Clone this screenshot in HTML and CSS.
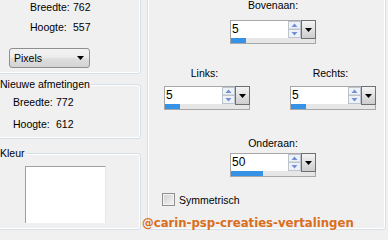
FILE: index.html
```html
<!DOCTYPE html>
<html>
<head>
<meta charset="utf-8">
<link rel="stylesheet" href="styles.css">
</head>
<body>
<div class="dialog">
  <div class="left">
    <div class="group g1">
      <div class="kv">
        <span>Breedte:</span><span>762</span>
        <span>Hoogte:</span><span>557</span>
      </div>
      <div class="select">
        <span>Pixels</span>
        <svg class="tri" width="7" height="4" viewBox="0 0 7 4"><path d="M0 0H7L3.5 4Z"/></svg>
      </div>
    </div>
    <fieldset class="group g2">
      <legend>Nieuwe afmetingen</legend>
      <div class="kv kv2">
        <span>Breedte:</span><span>772</span>
        <span>Hoogte:</span><span>612</span>
      </div>
    </fieldset>
    <fieldset class="group g3">
      <legend>Kleur</legend>
      <div class="swatch"></div>
    </fieldset>
  </div>

  <div class="group place">
    <div class="pos pos-top">
      <div class="lbl">Bovenaan:</div>
      <div class="spin">
        <div class="spin-row">
          <div class="spin-val">5</div>
          <svg class="spin-arrows" width="13" height="17" viewBox="0 0 13 17"><rect x="0.5" y="0.5" width="12" height="7.5" fill="#eef1f5" stroke="#bcc4cd"/><rect x="0.5" y="8.5" width="12" height="8" fill="#eef1f5" stroke="#bcc4cd"/><path d="M6.5 2.5L9.5 6H3.5Z" fill="#6e90d8"/><path d="M6.5 14.5L9.5 11H3.5Z" fill="#6e90d8"/></svg>
          <div class="spin-drop"><svg class="tri" width="7" height="4" viewBox="0 0 7 4"><path d="M0 0H7L3.5 4Z"/></svg></div>
        </div>
        <div class="spin-track"><div class="spin-fill" style="width:15px"></div></div>
      </div>
    </div>

    <div class="pair">
      <div class="pos">
        <div class="lbl">Links:</div>
        <div class="spin">
          <div class="spin-row">
            <div class="spin-val">5</div>
            <svg class="spin-arrows" width="13" height="17" viewBox="0 0 13 17"><rect x="0.5" y="0.5" width="12" height="7.5" fill="#eef1f5" stroke="#bcc4cd"/><rect x="0.5" y="8.5" width="12" height="8" fill="#eef1f5" stroke="#bcc4cd"/><path d="M6.5 2.5L9.5 6H3.5Z" fill="#6e90d8"/><path d="M6.5 14.5L9.5 11H3.5Z" fill="#6e90d8"/></svg>
            <div class="spin-drop"><svg class="tri" width="7" height="4" viewBox="0 0 7 4"><path d="M0 0H7L3.5 4Z"/></svg></div>
          </div>
          <div class="spin-track"><div class="spin-fill" style="width:15px"></div></div>
        </div>
      </div>
      <div class="pos">
        <div class="lbl">Rechts:</div>
        <div class="spin">
          <div class="spin-row">
            <div class="spin-val">5</div>
            <svg class="spin-arrows" width="13" height="17" viewBox="0 0 13 17"><rect x="0.5" y="0.5" width="12" height="7.5" fill="#eef1f5" stroke="#bcc4cd"/><rect x="0.5" y="8.5" width="12" height="8" fill="#eef1f5" stroke="#bcc4cd"/><path d="M6.5 2.5L9.5 6H3.5Z" fill="#6e90d8"/><path d="M6.5 14.5L9.5 11H3.5Z" fill="#6e90d8"/></svg>
            <div class="spin-drop"><svg class="tri" width="7" height="4" viewBox="0 0 7 4"><path d="M0 0H7L3.5 4Z"/></svg></div>
          </div>
          <div class="spin-track"><div class="spin-fill" style="width:15px"></div></div>
        </div>
      </div>
    </div>

    <div class="pos pos-bottom">
      <div class="lbl">Onderaan:</div>
      <div class="spin">
        <div class="spin-row">
          <div class="spin-val">50</div>
          <svg class="spin-arrows" width="13" height="17" viewBox="0 0 13 17"><rect x="0.5" y="0.5" width="12" height="7.5" fill="#eef1f5" stroke="#bcc4cd"/><rect x="0.5" y="8.5" width="12" height="8" fill="#eef1f5" stroke="#bcc4cd"/><path d="M6.5 2.5L9.5 6H3.5Z" fill="#6e90d8"/><path d="M6.5 14.5L9.5 11H3.5Z" fill="#6e90d8"/></svg>
          <div class="spin-drop"><svg class="tri" width="7" height="4" viewBox="0 0 7 4"><path d="M0 0H7L3.5 4Z"/></svg></div>
        </div>
        <div class="spin-track"><div class="spin-fill" style="width:32px"></div></div>
      </div>
    </div>

    <div class="check"><span class="box"></span><span>Symmetrisch</span></div>
  </div>
</div>
<div class="mark">@carin-psp-creaties-vertalingen</div>
</body>
</html>
```

FILE: styles.css
```css
html, body {
  margin: 0;
  padding: 0;
}
body {
  width: 388px;
  height: 240px;
  overflow: hidden;
  position: relative;
  background: #f0f0f0;
  color: #000;
  font-family: "Liberation Sans", Arial, sans-serif;
  font-size: 10.5px;
  line-height: 12px;
}
.dialog {
  display: flex;
  align-items: stretch;
  margin: -14px 0 0 -10px;
  height: 244px;
}
.left {
  display: flex;
  flex-direction: column;
  width: 151px;
  flex: none;
}
.group {
  border: 1px solid #d5dfe5;
  border-radius: 3px;
  box-shadow: inset 0 0 0 1px #fff;
  margin: 0;
  min-width: 0;
  box-sizing: border-box;
}
fieldset.group legend {
  padding: 0 1px 0 0;
  margin: 0;
  line-height: 13px;
  background: #f0f0f0;
}
.g1 {
  padding: 14px 0 5px 18px;
}
.kv {
  display: grid;
  grid-template-columns: 43px auto;
  row-gap: 8px;
  margin-left: 21px;
}
.kv2 {
  row-gap: 10px;
  margin-left: 13px;
}
.select {
  margin-top: 15px;
  width: 81px;
  height: 20px;
  box-sizing: border-box;
  border: 1px solid #8e8f8f;
  border-radius: 3px;
  background: linear-gradient(#f3f3f3 0%, #ececec 45%, #dedede 55%, #d3d3d3 100%);
  display: flex;
  align-items: center;
  justify-content: space-between;
  padding: 0 5px 0 4px;
}
.tri {
  display: block;
  fill: #000;
}
.g2 {
  margin-top: 4px;
  padding: 5px 0 8px 9px;
}
.g3 {
  margin-top: 8px;
  padding: 6px 0 0 9px;
  flex: 1;
}
.swatch {
  margin-left: 25px;
  width: 81px;
  height: 57px;
  box-sizing: border-box;
  background: #fff;
  border-top: 1px solid #a0a0a0;
  border-left: 1px solid #a0a0a0;
  border-right: 1px solid #e8e8e8;
}
.place {
  width: 239px;
  flex: none;
  margin-left: 6px;
  padding: 12px 0 0 14px;
  display: flex;
  flex-direction: column;
  align-items: flex-start;
}
.pos {
  display: flex;
  flex-direction: column;
  align-items: center;
  width: 86px;
}
.pos-top {
  margin-left: 68px;
}
.pos-top .lbl {
  margin-bottom: 9px;
}
.pair {
  display: flex;
  gap: 40px;
  margin: 23px 0 0 2px;
}
.pair .lbl {
  margin-bottom: 7px;
  padding-right: 5px;
}
.pos-bottom {
  margin: 27px 0 0 68px;
}
.pos-bottom .lbl {
  margin-bottom: 4px;
}
.spin {
  width: 86px;
  box-sizing: border-box;
  border: 1px solid #a7a7a7;
  background: #fff;
}
.spin-row {
  display: flex;
  height: 17px;
}
.spin-val {
  flex: 1;
  font-size: 12px;
  line-height: 17px;
  padding-left: 1px;
}
.spin-arrows {
  display: block;
  flex: none;
}
.spin-drop {
  flex: none;
  width: 15px;
  height: 19px;
  margin: -1px -1px 0 0;
  box-sizing: border-box;
  border: 1px solid #6f6f6f;
  background: linear-gradient(#f4f4f4, #cdcdcd);
  display: flex;
  align-items: center;
  justify-content: center;
}
.spin-track {
  height: 5px;
  background: #e6e6e6;
}
.spin-fill {
  height: 100%;
  background: #3592e6;
}
.check {
  margin-top: 16px;
  display: flex;
  align-items: center;
  gap: 4px;
  height: 13px;
}
.box {
  width: 13px;
  height: 13px;
  box-sizing: border-box;
  border: 1px solid #8e8f8f;
  background: linear-gradient(135deg, #cfcfcf, #f6f6f6);
  box-shadow: inset 0 0 0 1px #f4f4f4;
}
.mark {
  position: absolute;
  left: 142px;
  top: 216px;
  font-family: "DejaVu Sans Condensed", "DejaVu Sans", sans-serif;
  font-stretch: condensed;
  font-weight: bold;
  font-size: 13px;
  line-height: 13px;
  color: #d96f1e;
  white-space: nowrap;
}
```
